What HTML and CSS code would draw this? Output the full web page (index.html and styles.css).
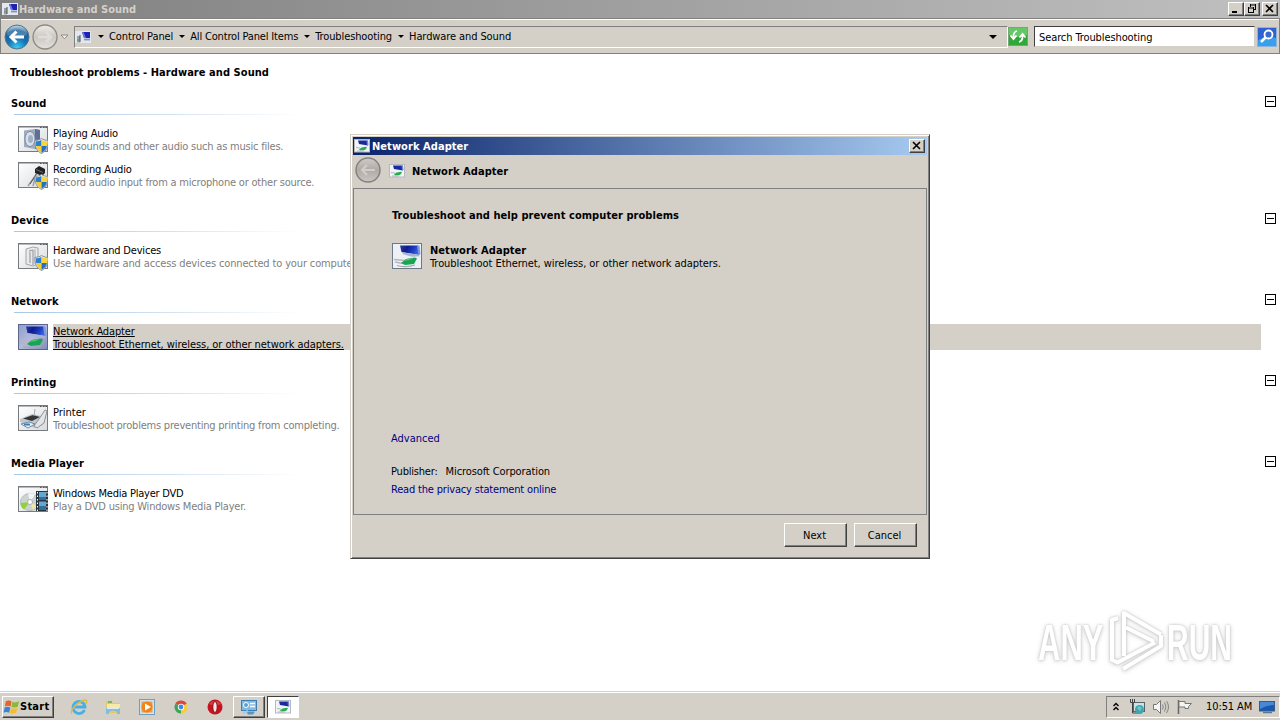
FILE: index.html
```html
<!DOCTYPE html>
<html lang="en">
  <head>
    <meta charset="UTF-8" />
    <meta name="viewport" content="width=device-width, initial-scale=1.0" />
    <title>Hardware and Sound</title>
    <link rel="stylesheet" href="styles.css">
  </head>
  <body>
    <!-- Shared icons -->
    <svg class="defs" aria-hidden="true">
      <defs>
        <linearGradient id="screen" x1="0" y1="0" x2="1" y2="0.3">
          <stop offset="0" stop-color="#2c3f9c" />
          <stop offset="0.4" stop-color="#0d1c8e" />
          <stop offset="0.75" stop-color="#1c3cc4" />
          <stop offset="1" stop-color="#3c62d8" />
        </linearGradient>
        <linearGradient id="paper" x1="0" y1="0" x2="1" y2="1">
          <stop offset="0" stop-color="#ffffff" />
          <stop offset="1" stop-color="#d8dadd" />
        </linearGradient>
        <linearGradient id="paperOn" x1="0" y1="0" x2="1" y2="1">
          <stop offset="0" stop-color="#8e9cd0" />
          <stop offset="0.5" stop-color="#b3bbdc" />
          <stop offset="1" stop-color="#7f8cba" />
        </linearGradient>
        <radialGradient id="blueBall" cx="0.5" cy="0.95" r="0.9">
          <stop offset="0" stop-color="#38d0f5" />
          <stop offset="0.45" stop-color="#1474b5" />
          <stop offset="0.8" stop-color="#1f5f95" />
          <stop offset="1" stop-color="#9cc4dc" />
        </radialGradient>
        <linearGradient id="greyBall" x1="0" y1="0" x2="0" y2="1">
          <stop offset="0" stop-color="#cfccc8" />
          <stop offset="0.5" stop-color="#aeaba7" />
          <stop offset="1" stop-color="#cbc8c4" />
        </linearGradient>
        <linearGradient id="paleBall" x1="0" y1="0" x2="0" y2="1">
          <stop offset="0" stop-color="#eeece8" />
          <stop offset="0.5" stop-color="#cbc8c3" />
          <stop offset="1" stop-color="#e4e2de" />
        </linearGradient>
      </defs>
      <symbol id="frame" viewBox="0 0 30 26">
        <rect x="0.5" y="0.5" width="29" height="25" fill="url(#paper)" stroke="#777b80" />
        <path d="M1 1.5h28" stroke="#b6babd" />
        <path d="M22 1.5h1.500M25 1.500h1.500M27.500 1.500h1.500" stroke="#555" />
      </symbol>
      <symbol id="shield" viewBox="0 0 14 16">
        <path d="M7 .5c2 1.300 4 1.800 6.500 1.900C13.700 9 12 13 7 15.500 2 13 .3 9 .5 2.400 3 2.300 5 1.800 7 .5z" fill="#e9edf0" stroke="#8592a0" />
        <path d="M7 2v6H1.600C1.400 6.500 1.300 5 1.400 3.300 3.500 3.200 5.300 2.900 7 2z" fill="#2b7fcf" />
        <path d="M7 2v6h5.400c.2-1.500.3-3 .2-4.700C10.500 3.200 8.700 2.900 7 2z" fill="#f7d53c" />
        <path d="M7 8H1.600C2.200 11 3.800 13.200 7 14.700z" fill="#f5cc30" />
        <path d="M7 8h5.400c-.6 3-2.200 5.200-5.400 6.700z" fill="#2470c0" />
      </symbol>
      <symbol id="netart" viewBox="0 0 30 26">
        <path d="M8 2.500h18l1.500 9.500L9.500 9z" fill="url(#screen)" />
        <path d="M25 2.500h2.500l1 8.500-2 .8z" fill="#7f98e4" />
        <path d="M10 9.200l16.500 2.600 1.500 1.400-8 .5-9-2.500z" fill="#aab4d2" />
        <path d="M2 16.500l11 1M3 19l8 1.500" stroke="#b3b7bd" stroke-width="1.300" />
        <path d="M14 16l9-1.500 2 1-3 5.500-9 1-4-2z" fill="#1ba355" />
        <path d="M14 16.300l8-1.500-4 2.200-6 1z" fill="#4cc476" />
        <path d="M5 22.500c4 1.500 12 1.500 18-.5" stroke="#a4a9b0" stroke-width="1.200" fill="none" />
      </symbol>
      <symbol id="netmini" viewBox="0 0 16 14">
        <rect x="0.500" y="0.500" width="15" height="12.500" fill="#f1f3f6" stroke="#b5bac0" />
        <path d="M4 1.500h9.500l.5 5L5 5z" fill="#1a2a9c" />
        <path d="M12.500 1.500H14l.5 4.500-1.500.3z" fill="#6c86e0" />
        <path d="M7.500 8.500l4.500-.8 1 .8-2 2.500-4.500.5L5 10.500z" fill="#27ad52" />
        <path d="M2 8.500l4 .6M3 12h7" stroke="#b0b4b9" />
      </symbol>
      <symbol id="panel" viewBox="0 0 16 14">
        <rect x="0" y="1" width="16" height="12" fill="#e4e8ee" />
        <path d="M7 2h8v6H9z" fill="#1c22b4" />
        <path d="M7 2h1.500l2.500 6H9z" fill="#6d7ed8" />
        <path d="M9 9.500h6" stroke="#7c94c0" stroke-width="1.800" />
        <path d="M2 6h3v6.500H2z" fill="#9aa1a8" />
        <path d="M5 5v7" stroke="#4a5158" />
        <path d="M2 10h2" stroke="#36aa55" />
      </symbol>
    </svg>

    <div class="screen">
      <div class="titlebar">
        <svg class="mini" viewBox="0 0 16 14"><use href="#panel" /></svg>
        <span class="title-text">Hardware and Sound</span>
        <div class="window-buttons">
          <button class="win-btn"><svg viewBox="0 0 12 10"><path d="M2 8h5" stroke="#000" stroke-width="2" /></svg></button>
          <button class="win-btn"><svg viewBox="0 0 12 10"><path d="M4 1h6M4.500 0v3M9.500 0v6M7 5.500h3M2 4h6M2.500 3v6M7.500 3v6M2 8.500h6" stroke="#000" /></svg></button>
          <button class="win-btn close"><svg viewBox="0 0 12 10"><path d="M2 1l7 7M9 1L2 8" stroke="#000" stroke-width="1.600" /></svg></button>
        </div>
      </div>

      <div class="toolbar">
        <svg class="ball" viewBox="0 0 26 26">
          <circle cx="13" cy="13" r="12" fill="url(#blueBall)" stroke="#55788f" />
          <path d="M3 11a10 9 0 0 1 20 0q-10 4-20 0z" fill="#fff" opacity="0.2" />
          <path d="M20 13H7M12.500 7.500L7 13l5.500 5.500" fill="none" stroke="#fff" stroke-width="3" />
        </svg>
        <svg class="ball forward" viewBox="0 0 26 26">
          <circle cx="13" cy="13" r="12" fill="url(#paleBall)" stroke="#8d8a85" stroke-width="1.300" />
          <path d="M6 13h13M14 8l5 5-5 5" fill="none" stroke="#e0ddd8" stroke-width="2.500" />
        </svg>
        <svg class="recent" viewBox="0 0 9 6"><path d="M1 1h7L4.500 4.800z" fill="#f4f2ee" stroke="#8d8a85" /></svg>
        <div class="address">
          <svg class="mini" viewBox="0 0 16 14"><use href="#panel" /></svg>
          <i class="arrow first"></i>
          <span class="crumb c1">Control Panel</span><i class="arrow"></i>
          <span class="crumb c2">All Control Panel Items</span><i class="arrow"></i>
          <span class="crumb c3">Troubleshooting</span><i class="arrow"></i>
          <span class="crumb c4">Hardware and Sound</span>
          <i class="arrow drop"></i>
        </div>
        <svg class="refresh" viewBox="0 0 20 19">
          <rect x="0.500" y="0.500" width="19" height="18" fill="#2fa83a" stroke="#71a873" />
          <path d="M1 1h18v7q-9 4-18 0z" fill="#66c767" />
          <path d="M9 4Q5 5 5.500 11M2.500 8.500l3 3.500 3-3.500M11 15q4-1 3.500-7M11.500 10.500l3-3.500 3 3.500" fill="none" stroke="#fff" stroke-width="1.800" />
        </svg>
        <div class="search">Search Troubleshooting</div>
        <svg class="search-btn" viewBox="0 0 20 20">
          <rect x="0.500" y="0.500" width="19" height="19" fill="#2d62d0" stroke="#8fb2dd" />
          <path d="M1 13q9-5 18-2v8H1z" fill="#37a0ea" />
          <circle cx="11.500" cy="7.500" r="4" fill="#3b68d0" stroke="#fff" stroke-width="1.800" />
          <path d="M8.500 10.500L4 15" stroke="#fff" stroke-width="2.500" />
        </svg>
      </div>

      <div class="content">
        <h1 class="page-title">Troubleshoot problems - Hardware and Sound</h1>

        <div class="section">
          <div class="section-head"><h2>Sound</h2><i class="collapse"></i></div>
          <div class="item">
            <svg class="icon" viewBox="0 0 30 28">
              <use href="#frame" width="30" height="26" />
              <path d="M6 4.500l11-1.500 5 1v18l-5 1-11-2z" fill="#9fabc0" />
              <path d="M17 3l5 1v18l-5 1z" fill="#5f7094" />
              <ellipse cx="12" cy="13" rx="5" ry="7.500" fill="#d6e0ea" stroke="#7f8da2" />
              <ellipse cx="12.500" cy="13" rx="2.500" ry="4" fill="#a3b1c2" />
              <use href="#shield" x="16" y="12" width="15" height="16" />
            </svg>
            <div class="item-text"><span class="n1">Playing Audio</span><span class="desc">Play sounds and other audio such as music files.</span></div>
          </div>
          <div class="item">
            <svg class="icon" viewBox="0 0 30 28">
              <use href="#frame" width="30" height="26" />
              <path d="M20 10L10 24M18 12L15 24" stroke="#9ca0a4" stroke-width="1.500" />
              <path d="M17 7l4-3 6 3v4l-3 3-7-3z" fill="#202226" />
              <path d="M18 7.500l7 3" stroke="#6c7076" />
              <path d="M19 11L12 22" stroke="#555" />
              <use href="#shield" x="16" y="12" width="15" height="16" />
            </svg>
            <div class="item-text"><span class="n2">Recording Audio</span><span class="desc">Record audio input from a microphone or other source.</span></div>
          </div>
        </div>

        <div class="section">
          <div class="section-head"><h2>Device</h2><i class="collapse"></i></div>
          <div class="item">
            <svg class="icon" viewBox="0 0 30 28">
              <use href="#frame" width="30" height="26" />
              <path d="M8 6l7-2 5 1v16l-5 2-7-2z" fill="#e9eaeb" stroke="#a4a7aa" />
              <path d="M11 8l4-1v15M12 9v11" fill="none" stroke="#8e9195" />
              <path d="M17 6v15" stroke="#c9cbcd" stroke-width="2" />
              <use href="#shield" x="16" y="12" width="15" height="16" />
            </svg>
            <div class="item-text"><span class="n3">Hardware and Devices</span><span class="desc wide">Use hardware and access devices connected to your computer.</span></div>
          </div>
        </div>

        <div class="section">
          <div class="section-head"><h2>Network</h2><i class="collapse"></i></div>
          <div class="item selected">
            <svg class="icon" viewBox="0 0 30 28">
              <rect x="0.500" y="0.500" width="29" height="25" fill="url(#paperOn)" stroke="#5d6688" />
              <use href="#netart" width="30" height="26" />
            </svg>
            <div class="item-text"><span class="n4">Network Adapter</span><span class="long">Troubleshoot Ethernet, wireless, or other network adapters.</span></div>
          </div>
        </div>

        <div class="section">
          <div class="section-head"><h2>Printing</h2><i class="collapse"></i></div>
          <div class="item">
            <svg class="icon" viewBox="0 0 30 28">
              <use href="#frame" width="30" height="26" />
              <path d="M2 14l12-5 14 3-3 8-9 3-14-6z" fill="#c3c7cb" />
              <path d="M5 13.500l10-3.500 7 2-8 4z" fill="#33373b" />
              <path d="M16 11l1-7" stroke="#aaa" />
              <path d="M21 14l6-9 2 1-3 12-7 5-3-2z" fill="#e2e5e8" stroke="#8c9196" />
              <path d="M3 19l8-2 6 2-7 4z" fill="#e9f3fb" stroke="#6d8ba3" />
              <path d="M6 19.500l6 0" stroke="#3d7eb0" stroke-width="2" />
            </svg>
            <div class="item-text"><span>Printer</span><span class="desc">Troubleshoot problems preventing printing from completing.</span></div>
          </div>
        </div>

        <div class="section">
          <div class="section-head"><h2>Media Player</h2><i class="collapse"></i></div>
          <div class="item">
            <svg class="icon" viewBox="0 0 30 28">
              <use href="#frame" width="30" height="26" />
              <ellipse cx="12" cy="16" rx="9.500" ry="8.500" fill="#ccd3d1" stroke="#b5bcbe" />
              <path d="M12 16L2.500 17a9 8 0 0 0 3.500 6.500z" fill="#8fd33c" />
              <path d="M12 16L10 7.500a9 9 0 0 1 7 1z" fill="#f3f6f7" />
              <path d="M12 16l7 4a9 9 0 0 1-4 4z" fill="#efe7a8" />
              <circle cx="12" cy="16" r="2.500" fill="#fff" stroke="#aab1b3" />
              <rect x="18" y="5" width="12" height="20" fill="#27343e" />
              <path d="M21 6h7v8h-7zM21 15.500h7V24h-7z" fill="#62a8d4" />
              <path d="M21 11h7v3h-7zM21 20h7v4h-7z" fill="#2f6f9a" />
              <path d="M19.500 6v19M29 6v19" stroke="#fff" stroke-dasharray="1.500 2" />
            </svg>
            <div class="item-text"><span class="n6">Windows Media Player DVD</span><span class="desc">Play a DVD using Windows Media Player.</span></div>
          </div>
        </div>
      </div>

      <div class="taskbar">
        <button class="start">
          <svg viewBox="0 0 18 16">
            <path d="M3 2q3-2 6 0L8 7.500q-3-1.500-6 0z" fill="#e8622c" />
            <path d="M10 2.500q3 1.500 7-.5l-1.500 6Q12 9 8.900 8z" fill="#86b93c" />
            <path d="M1.800 8.500q3-1.500 6 0L6.500 14q-3-1.500-6 0z" fill="#3c83d2" />
            <path d="M8.700 9q3 1.500 6.500-.2L14 14q-3.500 1.500-6.700.3z" fill="#f4bd2d" />
          </svg>
          <span>Start</span>
        </button>
        <div class="quick">
          <svg viewBox="0 0 18 18">
            <path d="M14.500 12A6 6 0 1 1 15 9H5" fill="none" stroke="#48aee4" stroke-width="2.800" />
            <path d="M2 16C-1 14 6 4 15 2c3 0 1.500 3 .5 4" fill="none" stroke="#dfba43" stroke-width="1.300" />
          </svg>
          <svg viewBox="0 0 18 18">
            <path d="M2 3h6l1 2h7v10H2z" fill="#e6c962" />
            <path d="M3 6h13v5H3z" fill="#f8e9a4" />
            <path d="M4 4h4" stroke="#58aa65" stroke-width="1.500" />
            <path d="M2 10h14v6h-3v-2q-4-3-8 0v2H2z" fill="#84bde0" />
            <path d="M3 10.500h12" stroke="#d7eefa" />
          </svg>
          <svg viewBox="0 0 18 18">
            <rect x="1.500" y="1.500" width="15" height="15" fill="#cfe5f4" stroke="#6b9fc4" />
            <rect x="3.500" y="3.500" width="11" height="11" fill="#f3a04a" />
            <circle cx="9" cy="9" r="5.500" fill="#f08418" />
            <path d="M7 5.500l6 3.500-6 3.500z" fill="#fff" />
          </svg>
          <svg viewBox="0 0 18 18">
            <path d="M9 9L3.400 5.700A6.500 6.500 0 0 1 14.600 5.700z" fill="#e0453a" />
            <path d="M9 9L3.400 5.700A6.500 6.500 0 0 0 9 15.500z" fill="#3aa655" />
            <path d="M9 9l5.600-3.300A6.500 6.500 0 0 1 9 15.500z" fill="#f8cc3c" />
            <circle cx="9" cy="9" r="3.200" fill="#fff" />
            <circle cx="9" cy="9" r="2.400" fill="#4586ea" />
          </svg>
          <svg viewBox="0 0 18 18">
            <circle cx="9" cy="9" r="7.500" fill="#c41420" />
            <path d="M3 6a7 6 0 0 1 12 0q-6 3-12 0z" fill="#e05a5a" opacity="0.600" />
            <ellipse cx="9" cy="9" rx="2.200" ry="5.500" fill="#f4e6e6" stroke="#8c0c14" />
          </svg>
        </div>
        <button class="task">
          <svg viewBox="0 0 18 18">
            <rect x="1.500" y="2.500" width="15" height="10" fill="#7dbbea" stroke="#3d7eae" />
            <circle cx="6" cy="7" r="2.500" fill="#5f9ed0" stroke="#fff" />
            <path d="M10 5.500h5M10 8.500h5" stroke="#fff" stroke-width="1.500" />
            <path d="M6 13.500h9l-2 3H8z" fill="#5496c6" />
            <path d="M3 15l5-2" stroke="#a8cbe0" stroke-width="2" />
          </svg>
        </button>
        <button class="task active">
          <svg viewBox="0 0 16 14"><use href="#netmini" /></svg>
        </button>
        <div class="tray">
          <svg class="chevrons" viewBox="0 0 8 10"><path d="M1.500 4L4 1.500 6.500 4M1.500 8L4 5.500 6.500 8" fill="none" stroke="#000" stroke-width="1.400" /></svg>
          <svg class="tray-net" viewBox="0 0 16 16">
            <rect x="4.500" y="3.500" width="11" height="9" fill="#cbe2e9" stroke="#55646b" />
            <path d="M1.500 0v3.500h4V0M3.500 0v14h8" fill="none" stroke="#444" />
            <circle cx="10.500" cy="10.500" r="4.500" fill="#3da5b5" />
            <path d="M8 9l2-2 3 2-2 3z" fill="#78c8b0" />
          </svg>
          <svg class="tray-sound" viewBox="0 0 18 16">
            <path d="M1.500 5.500h3l4-4v13l-4-4h-3z" fill="#f5f5f5" stroke="#777" />
            <path d="M10.500 5.500q1.500 2.500 0 5M12.500 3.500q3 4.500 0 9M14.500 2q4 6 0 12" fill="none" stroke="#858585" />
          </svg>
          <svg class="tray-flag" viewBox="0 0 18 16">
            <path d="M2.500 1v14" stroke="#666" stroke-width="1.500" />
            <path d="M3 2.500h6v2h6.500l-3 3 0 2H9v-1.500H3z" fill="#f4f4f2" stroke="#777" />
          </svg>
          <span class="clock">10:51 AM</span>
          <svg class="desktop" viewBox="0 0 16 14">
            <rect x="0.500" y="1.500" width="15" height="9.500" fill="#1d58b0" stroke="#355c8c" />
            <path d="M1 2h14v3Q8 5 1 9z" fill="#4888d8" />
            <path d="M4 12.500h9" stroke="#56789c" stroke-width="1.500" />
          </svg>
        </div>
      </div>

      <!-- Watermark -->
      <svg class="watermark" viewBox="0 0 210 70">
        <g class="mark-text">
          <text transform="translate(8 55) scale(0.62 1)">ANY</text>
          <text transform="translate(137 55) scale(0.6 1)">RUN</text>
        </g>
        <g class="mark-line">
          <path d="M94 51V8L131 29.500" />
          <path d="M96 22.500L124 36.500" />
          <path d="M88 13l-6 2V55l5.500 2.500L125 37.500" />
          <path d="M93 64L131 41V30" />
        </g>
      </svg>

      <div class="dialog">
        <div class="dialog-title">
          <svg class="mini" viewBox="0 0 16 14"><use href="#netmini" /></svg>
          <span class="bold">Network Adapter</span>
          <button class="win-btn"><svg viewBox="0 0 12 10"><path d="M2 1l7 7M9 1L2 8" stroke="#000" stroke-width="1.600" /></svg></button>
        </div>
        <div class="dialog-head">
          <svg class="ball" viewBox="0 0 26 26">
            <circle cx="13" cy="13" r="12" fill="url(#greyBall)" stroke="#85827e" stroke-width="1.500" />
            <path d="M20 13H7M12 8l-5 5 5 5" fill="none" stroke="#d0cdc9" stroke-width="2.200" />
          </svg>
          <svg class="mini" viewBox="0 0 16 14"><use href="#netmini" /></svg>
          <span class="bold">Network Adapter</span>
        </div>
        <div class="dialog-body">
          <h3>Troubleshoot and help prevent computer problems</h3>
          <div class="adapter">
            <svg class="icon" viewBox="0 0 30 26">
              <rect x="0.500" y="0.500" width="29" height="25" fill="#edf0f4" stroke="#6e7a8a" />
              <use href="#netart" width="30" height="26" />
            </svg>
            <div class="item-text"><span class="bold">Network Adapter</span><span class="long">Troubleshoot Ethernet, wireless, or other network adapters.</span></div>
          </div>
          <a class="link">Advanced</a>
          <p class="publisher"><span class="p1">Publisher:</span><span class="p2">Microsoft Corporation</span></p>
          <a class="link privacy">Read the privacy statement online</a>
        </div>
        <div class="dialog-foot">
          <button class="push">Next</button>
          <button class="push">Cancel</button>
        </div>
      </div>
    </div>
  </body>
</html>
```
FILE: styles.css
```css
* {
  box-sizing: border-box;
}

body {
  margin: 0;
  background-color: #fff;
  color: #000;
  font-family: "DejaVu Sans Condensed", "DejaVu Sans", sans-serif;
  font-size: 11px;
  line-height: 13px;
}

h1, h2, h3, p {
  margin: 0;
  font-size: 11px;
}

h1, h2, h3, .bold {
  font-weight: bold;
  letter-spacing: 0.06px;
}

button {
  padding: 0;
  font: inherit;
  color: #000;
}

svg {
  display: block;
  flex: none;
}

span, h1, h2, h3, a {
  white-space: nowrap;
}

.defs {
  position: absolute;
  width: 0;
  height: 0;
}

.screen {
  position: relative;
  width: 1280px;
  height: 720px;
  overflow: hidden;
  display: flex;
  flex-direction: column;
}

.mini {
  width: 16px;
  height: 14px;
}

/* Window title */
.titlebar {
  height: 18px;
  display: flex;
  align-items: center;
  padding: 0 2px;
  background: linear-gradient(to right, #808080, #c0c0c0);
}

.title-text {
  margin-left: 1px;
  color: #d4d0c8;
  font-weight: bold;
}

.window-buttons {
  display: flex;
  margin-left: auto;
}

.win-btn {
  width: 16px;
  height: 14px;
  display: flex;
  align-items: center;
  justify-content: center;
  background-color: #d4d0c8;
  border: 1px solid;
  border-color: #fff #404040 #404040 #fff;
  box-shadow: inset -1px -1px #808080;
}

.win-btn svg {
  width: 12px;
  height: 10px;
}

.close {
  margin-left: 2px;
}

/* Navigation bar */
.toolbar {
  height: 36px;
  display: flex;
  align-items: center;
  padding: 1px 2px 0 3px;
  background-color: #d4d0c8;
  border: 1px solid #808080;
  box-shadow: inset 0 1px #fff;
}

.ball {
  width: 26px;
  height: 26px;
}

.forward {
  margin-left: 2px;
}

.recent {
  width: 9px;
  height: 6px;
  margin-left: 2px;
}

.address {
  width: 934px;
  height: 22px;
  display: flex;
  align-items: center;
  margin-left: 5px;
  border: 1px solid;
  border-color: #808080 #fff #fff #808080;
}

.c1, .c3, .c4, .search {
  letter-spacing: -0.1px;
}

.c2 {
  letter-spacing: -0.17px;
}

.arrow {
  border: 3px solid transparent;
  border-top-color: #000;
  border-bottom: 0;
  margin: 0 5px 0 6px;
}

.first {
  margin-left: 7px;
}

.drop {
  border-width: 4px;
  border-bottom: 0;
  margin: 0 10px 0 auto;
}

.refresh {
  width: 20px;
  height: 19px;
  margin-right: 6px;
}

.search {
  width: 221px;
  height: 21px;
  padding: 4px 4px 2px;
  background-color: #fff;
  border: 1px solid;
  border-color: #404040 #d4d0c8 #d4d0c8 #404040;
}

.search-btn {
  width: 20px;
  height: 20px;
  margin-left: 2px;
}

/* Troubleshooter list */
.content {
  flex: 1;
  padding: 12px 3px 0 10px;
}

.page-title {
  margin-bottom: 16px;
}

.section {
  margin-bottom: 24px;
}

.section-head {
  height: 31px;
  display: flex;
  justify-content: space-between;
  padding-top: 1px;
  padding-left: 1px;
  background: linear-gradient(to right, #a9c8e4, #cfe0f0 50%, #fff) 4px 19px / 286px 1px no-repeat;
}

.section-head h2 {
  padding-top: 1px;
}

.collapse {
  width: 11px;
  height: 11px;
  margin-right: 1px;
  border: 1px solid #000;
  background: linear-gradient(#000, #000) center / 7px 1px no-repeat;
}

.item {
  height: 26px;
  display: flex;
  gap: 5px;
  margin-left: 8px;
  margin-right: 16px;
}

.item + .item {
  margin-top: 10px;
}

.icon {
  width: 30px;
  height: 28px;
}

.item-text {
  flex: 1;
  height: 26px;
  display: flex;
  flex-direction: column;
  align-items: flex-start;
}

.item .item-text {
  padding-top: 1px;
}

.n1, .n3 {
  letter-spacing: -0.18px;
}

.n2, .n4 {
  letter-spacing: -0.13px;
}

.n6 {
  letter-spacing: -0.23px;
}

.desc {
  color: #808080;
  letter-spacing: -0.21px;
}

.wide {
  letter-spacing: -0.14px;
}

.long {
  letter-spacing: -0.06px;
}

.selected .item-text {
  background-color: #d4d0c8;
  text-decoration: underline;
}

/* Taskbar */
.taskbar {
  height: 29px;
  display: flex;
  align-items: center;
  padding: 2px 0 0 2px;
  background-color: #d4d0c8;
  box-shadow: inset 0 1px #d4d0c8, inset 0 2px #fff;
}

.start {
  width: 52px;
  height: 22px;
  display: flex;
  align-items: center;
  font-weight: bold;
  letter-spacing: 0.25px;
  background-color: #d4d0c8;
  border: 1px solid;
  border-color: #fff #404040 #404040 #fff;
  box-shadow: inset -1px -1px #808080;
}

.start svg {
  width: 17px;
  height: 16px;
}

.quick {
  display: flex;
  gap: 16px;
  margin-left: 16px;
  margin-right: 9px;
}

.quick svg {
  width: 18px;
  height: 18px;
}

.task {
  width: 32px;
  height: 22px;
  display: flex;
  align-items: center;
  justify-content: center;
  background-color: #d4d0c8;
  border: 1px solid;
  border-color: #fff #404040 #404040 #fff;
  box-shadow: inset -1px -1px #808080;
  margin-right: 2px;
}

.task svg {
  width: 18px;
  height: 18px;
}

.active {
  background-color: #fff;
  border-color: #404040 #fff #fff #404040;
  box-shadow: none;
}

.active svg {
  width: 16px;
  height: 14px;
}

.tray {
  width: 174px;
  height: 22px;
  display: flex;
  align-items: center;
  margin-left: auto;
  padding-left: 5px;
  border: 1px solid;
  border-color: #808080 #fff #fff #808080;
}

.chevrons {
  width: 8px;
  height: 10px;
}

.tray-net {
  width: 16px;
  height: 16px;
  margin-left: 9px;
}

.tray-sound {
  width: 18px;
  height: 16px;
  margin-left: 7px;
}

.tray-flag {
  width: 18px;
  height: 16px;
  margin-left: 6px;
}

.clock {
  margin-left: 12px;
  letter-spacing: -0.1px;
}

.desktop {
  width: 16px;
  height: 14px;
  margin-left: auto;
  margin-right: 4px;
}

.watermark {
  position: absolute;
  left: 1030px;
  top: 605px;
  width: 210px;
  height: 70px;
  fill: #fff;
  filter: drop-shadow(0 0 1px #c4c4c4) drop-shadow(0 1px 2px #d4d4d4);
}

.mark-text {
  font: bold 50px "Liberation Sans", sans-serif;
}

.mark-line {
  fill: none;
  stroke: #fff;
  stroke-width: 4px;
  stroke-linejoin: round;
}

/* Troubleshooter dialog */
.dialog {
  position: absolute;
  left: 350px;
  top: 134px;
  width: 580px;
  height: 425px;
  display: flex;
  flex-direction: column;
  padding: 2px;
  background-color: #d4d0c8;
  border: 1px solid;
  border-color: #d4d0c8 #404040 #404040 #d4d0c8;
  box-shadow: inset 1px 1px #fff, inset -1px -1px #808080;
}

.dialog-title {
  height: 18px;
  display: flex;
  align-items: center;
  padding-left: 1px;
  padding-right: 2px;
  color: #fff;
  background: linear-gradient(to right, #0a246a, #a6caf0);
}

.dialog-title .bold {
  flex: 1;
  margin-left: 2px;
}

.dialog-head {
  height: 33px;
  display: flex;
  align-items: center;
  padding-bottom: 1px;
  padding-left: 2px;
}

.dialog-head .ball {
  margin-bottom: 2px;
}

.dialog-head .mini {
  margin-left: 8px;
  margin-right: 7px;
}

.dialog-body {
  height: 327px;
  padding: 20px 37px 0;
  border: 1px solid #808080;
}

.dialog-body h3 {
  padding-left: 1px;
}

.adapter {
  display: flex;
  gap: 8px;
  margin-top: 21px;
  margin-bottom: 163px;
  margin-left: 1px;
}

.adapter .icon {
  height: 26px;
}

.adapter .item-text {
  padding-top: 1px;
}

.link {
  display: block;
  color: #00007f;
}

.privacy {
  letter-spacing: -0.18px;
}

.publisher {
  display: flex;
  gap: 8px;
  margin: 20px 0 5px;
}

.p1 {
  letter-spacing: -0.2px;
}

.p2 {
  letter-spacing: -0.1px;
}

.dialog-foot {
  display: flex;
  justify-content: flex-end;
  gap: 7px;
  padding: 8px 10px 0;
}

.push {
  width: 63px;
  height: 24px;
  padding-right: 2px;
  background-color: #d4d0c8;
  border: 1px solid;
  border-color: #fff #404040 #404040 #fff;
  box-shadow: inset -1px -1px #808080;
}
```
